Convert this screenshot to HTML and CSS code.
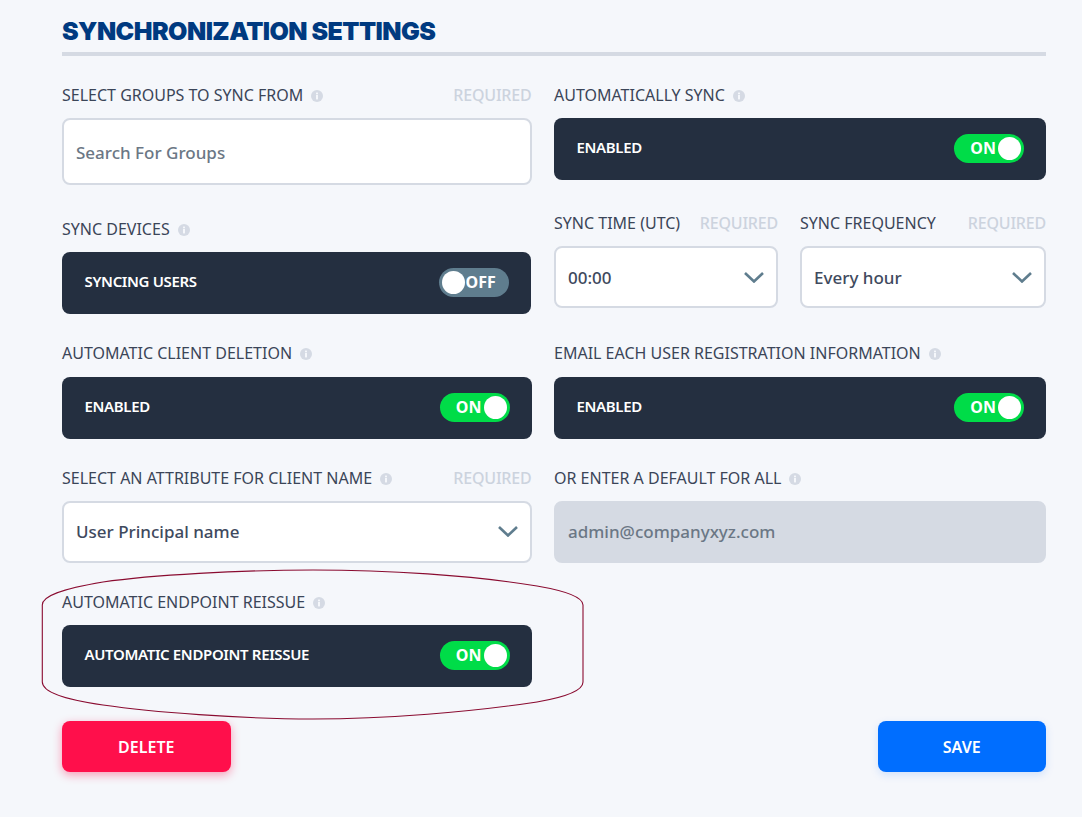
FILE: index.html
```html
<!DOCTYPE html>
<html lang="en">
<head>
  <meta charset="UTF-8">
  <title>Synchronization Settings</title>
  <meta name="viewport" content="width=device-width, initial-scale=1.0">
  <link rel="stylesheet" href="styles.css">
</head>
<body>
  <svg width="0" height="0" class="svg-defs">
    <symbol id="info" viewBox="0 0 12 12">
      <circle cx="6" cy="6" r="6" fill="#d5dae4"/>
      <rect x="5" y="5" width="2" height="4.4" fill="#f5f7fb"/>
      <rect x="5" y="2.6" width="2" height="1.7" fill="#f5f7fb"/>
    </symbol>
    <symbol id="chevron" viewBox="0 0 20 11">
      <polyline points="1,1 10,9.5 19,1" fill="none" stroke="#5f7d8e" stroke-width="2.6"/>
    </symbol>
  </svg>

  <div class="settings">
    <h1 class="settings-title">SYNCHRONIZATION SETTINGS</h1>

    <div class="form-grid">
      <div class="field field-first">
        <div class="field-label">
          <span>SELECT GROUPS TO SYNC FROM</span>
          <svg class="info"><use href="#info"/></svg>
          <span class="required">REQUIRED</span>
        </div>
        <div class="input input-tall placeholder">Search For Groups</div>
      </div>

      <div class="field field-first">
        <div class="field-label">
          <span>AUTOMATICALLY SYNC</span>
          <svg class="info"><use href="#info"/></svg>
        </div>
        <div class="switch-box">
          <span class="switch-text">ENABLED</span>
          <div class="toggle on"><span>ON</span><i></i></div>
        </div>
      </div>

      <div class="field field-low">
        <div class="field-label">
          <span>SYNC DEVICES</span>
          <svg class="info"><use href="#info"/></svg>
        </div>
        <div class="switch-box">
          <span class="switch-text">SYNCING USERS</span>
          <div class="toggle off"><i></i><span>OFF</span></div>
        </div>
      </div>

      <div class="field-pair">
        <div class="field">
          <div class="field-label">
            <span>SYNC TIME (UTC)</span>
            <span class="required">REQUIRED</span>
          </div>
          <div class="input select">00:00<svg class="chevron"><use href="#chevron"/></svg></div>
        </div>
        <div class="field">
          <div class="field-label">
            <span>SYNC FREQUENCY</span>
            <span class="required">REQUIRED</span>
          </div>
          <div class="input select">Every hour<svg class="chevron"><use href="#chevron"/></svg></div>
        </div>
      </div>

      <div class="field field-spaced">
        <div class="field-label">
          <span>AUTOMATIC CLIENT DELETION</span>
          <svg class="info"><use href="#info"/></svg>
        </div>
        <div class="switch-box">
          <span class="switch-text">ENABLED</span>
          <div class="toggle on"><span>ON</span><i></i></div>
        </div>
      </div>

      <div class="field field-spaced">
        <div class="field-label">
          <span>EMAIL EACH USER REGISTRATION INFORMATION</span>
          <svg class="info"><use href="#info"/></svg>
        </div>
        <div class="switch-box">
          <span class="switch-text">ENABLED</span>
          <div class="toggle on"><span>ON</span><i></i></div>
        </div>
      </div>

      <div class="field field-raised">
        <div class="field-label">
          <span>SELECT AN ATTRIBUTE FOR CLIENT NAME</span>
          <svg class="info"><use href="#info"/></svg>
          <span class="required">REQUIRED</span>
        </div>
        <div class="input select">User Principal name<svg class="chevron"><use href="#chevron"/></svg></div>
      </div>

      <div class="field field-raised">
        <div class="field-label">
          <span>OR ENTER A DEFAULT FOR ALL</span>
          <svg class="info"><use href="#info"/></svg>
        </div>
        <div class="input disabled">admin@companyxyz.com</div>
      </div>

      <div class="field field-marked">
        <div class="field-label">
          <span>AUTOMATIC ENDPOINT REISSUE</span>
          <svg class="info"><use href="#info"/></svg>
        </div>
        <div class="switch-box">
          <span class="switch-text">AUTOMATIC ENDPOINT REISSUE</span>
          <div class="toggle on"><span>ON</span><i></i></div>
        </div>
        <!-- hand drawn annotation around the field -->
        <svg class="annotation" viewBox="0 0 544 151" fill="none">
          <path d="M1.3 36 C1.3 27 20 20 62 13 C110 6 200 1 272 1 C345 1 430 6 496 17 C525 22 542 28 542 36 L542 113 C542 122 525 128 496 133 C430 143 345 150 272 150 C200 150 110 143 62 136 C20 130 1.3 122 1.3 113 Z" stroke="#8a0b30" stroke-width="1.1"/>
        </svg>
      </div>
    </div>

    <div class="actions">
      <a href="#" class="btn btn-delete">DELETE</a>
      <a href="#" class="btn btn-save">SAVE</a>
    </div>
  </div>
</body>
</html>
```

FILE: styles.css
```css
* {
  margin: 0;
  padding: 0;
  box-sizing: border-box;
}
body {
  font-family: 'Noto Sans', sans-serif;
  background: #f5f7fb;
  color: #3b4558;
}
.svg-defs {
  display: block;
  height: 0;
}
.settings {
  padding: 0 36px 45px 62px;
}
.settings-title {
  height: 56px;
  padding-top: 17px;
  border-bottom: 4px solid #d5dae3;
  font-family: 'Inter', sans-serif;
  font-size: 25px;
  font-weight: 900;
  line-height: 29px;
  letter-spacing: -0.55px;
  color: #003a80;
}
.form-grid {
  display: grid;
  grid-template-columns: 469.5px 492px;
  column-gap: 22.5px;
  row-gap: 28px;
  margin-top: 28px;
}
.field-first {
  margin-bottom: -1px;
}
.field-low {
  padding-top: 6px;
}
.field-low .switch-box {
  margin-right: 1px;
}
.field-spaced .field-label {
  margin-bottom: 12px;
}
.field-raised .input {
  padding-bottom: 2px;
}
.field-pair {
  display: grid;
  grid-template-columns: 224px 246px;
  column-gap: 22px;
}
.field-marked {
  position: relative;
}
.field-label {
  display: flex;
  align-items: center;
  height: 23px;
  margin-bottom: 11px;
  font-size: 16px;
  font-weight: 400;
  line-height: 21px;
  white-space: nowrap;
}
.info {
  width: 12px;
  height: 12px;
  margin-left: 8px;
}
.required {
  margin-left: auto;
  font-weight: 500;
  letter-spacing: -0.2px;
  color: #ccd3de;
}
.input {
  display: flex;
  align-items: center;
  height: 62px;
  padding: 0 12px;
  background: #fff;
  border: 2px solid #d5dae3;
  border-radius: 8px;
  font-size: 17px;
  font-weight: 500;
  color: #3f4a5e;
}
.input-tall {
  height: 67px;
  padding-top: 2px;
}
.placeholder {
  color: #6b7785;
}
.select {
  justify-content: space-between;
}
.chevron {
  width: 20px;
  height: 11px;
}
.disabled {
  background: #d5dae3;
  border-color: #d5dae3;
  color: #6b7785;
}
.switch-box {
  display: flex;
  align-items: center;
  justify-content: space-between;
  height: 62px;
  padding: 0 22px 2px 22.5px;
  background: #242f40;
  border-radius: 8px;
  font-size: 15px;
  font-weight: 600;
  letter-spacing: -0.35px;
  color: #fff;
}
.switch-text {
  margin-bottom: 2px;
}
.toggle {
  display: flex;
  align-items: center;
  justify-content: flex-end;
  gap: 2px;
  width: 70px;
  height: 29px;
  padding: 0 3px;
  border-radius: 15px;
  font-size: 16px;
  font-weight: 700;
  letter-spacing: 0;
  color: #fff;
}
.toggle span {
  margin-bottom: 1px;
}
.toggle i {
  width: 23px;
  height: 23px;
  border-radius: 50%;
  background: #fff;
}
.toggle.on {
  background: #00dc48;
}
.toggle.off {
  justify-content: flex-start;
  gap: 1px;
  background: #5f7d8e;
}
.annotation {
  position: absolute;
  left: -21px;
  top: -22px;
  width: 544px;
  height: 151px;
  pointer-events: none;
}
.actions {
  display: flex;
  justify-content: space-between;
  margin-top: 34px;
}
.btn {
  display: flex;
  align-items: center;
  justify-content: center;
  width: 168.5px;
  height: 51px;
  border-radius: 8px;
  font-size: 16px;
  font-weight: 600;
  color: #fff;
  text-decoration: none;
}
.btn-delete {
  background: #ff0f4b;
  box-shadow: 0 3px 10px rgba(255, 15, 75, 0.4);
}
.btn-save {
  background: #006eff;
  box-shadow: 0 3px 8px rgba(0, 110, 255, 0.15);
}
```
